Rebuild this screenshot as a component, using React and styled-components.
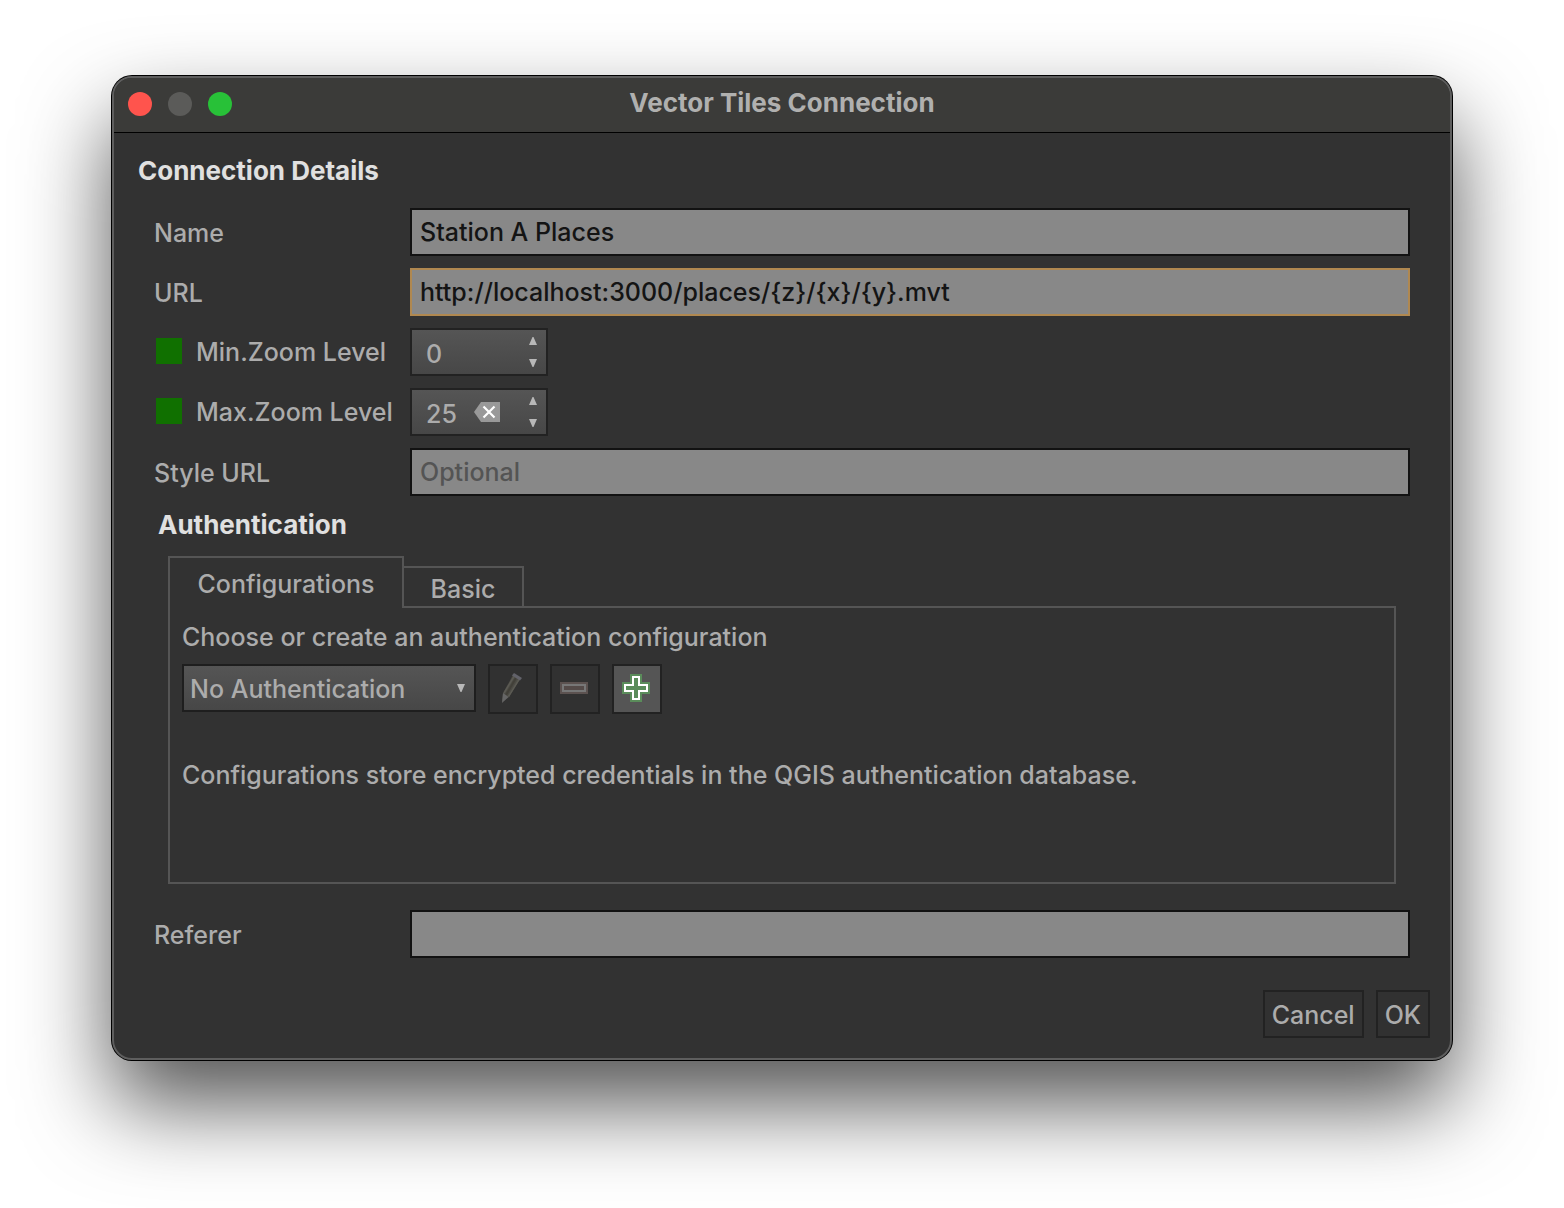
import React, { useState } from "react";
import styled, { createGlobalStyle } from "styled-components";

const Global = createGlobalStyle`
  *, *::before, *::after { box-sizing: border-box; }
  body {
    margin: 0;
    background: #fff;
    color: #acacac;
    font-family: Inter, "Liberation Sans", sans-serif;
    font-size: 25px;
    font-weight: 500;
    line-height: 32px;
  }
  button, input, select { font: inherit; color: inherit; margin: 0; outline: none; }
`;

const Desktop = styled.main`
  min-height: 100vh;
  padding: 76px 112px 148px;
`;

const Window = styled.section`
  border: 2px solid #5e5e5e;
  border-radius: 20px;
  overflow: hidden;
  background: #323232;
  box-shadow: 0 0 0 1px #000, 0 44px 88px rgba(0, 0, 0, 0.68);
`;

const TitleBar = styled.header`
  display: grid;
  grid-template-columns: 1fr auto 1fr;
  align-items: center;
  height: 55px;
  padding: 0 14px 2px;
  background: #3b3b39;
  border-bottom: 1px solid #000;
`;

const Title = styled.h1`
  margin: 0;
  padding-bottom: 2px;
  font-size: 26px;
  font-weight: 700;
  color: #b0b0af;
`;

const Lights = styled.div`
  display: flex;
  gap: 16px;
`;

const Light = styled.button`
  width: 24px;
  height: 24px;
  padding: 0;
  border: 0;
  border-radius: 50%;
  background: ${(p) => p.$color};
`;

const Body = styled.form`
  padding: 0 20px 20px 24px;
`;

const Heading = styled.h2`
  margin: 0;
  font-size: 26px;
  font-weight: 700;
  color: #e0e0e0;
`;

const SectionHeading = styled(Heading)`
  padding: 22px 0 21px;
`;

const AuthHeading = styled(Heading)`
  padding: 13px 4px 15px;
`;

const Fields = styled.div`
  display: grid;
  gap: 12px;
`;

const Indent = styled.div`
  padding: 0 20px 0 16px;
`;

const Row = styled.div`
  display: grid;
  grid-template-columns: 256px 1fr;
  align-items: center;
  height: 48px;
`;

const Label = styled.label`
  padding-top: 2px;
`;

const CheckLabel = styled.label`
  display: flex;
  align-items: flex-start;
  gap: 14px;
  padding: 0 2px;
  white-space: nowrap;
`;

const Check = styled.input`
  appearance: none;
  flex: none;
  width: 26px;
  height: 26px;
  margin-top: 2px;
  background: ${(p) => (p.checked ? "#107000" : "#555")};
`;

const TextBox = styled.input`
  width: 100%;
  height: 48px;
  padding: 0 8px;
  border: 2px solid ${(p) => (p.$active ? "#b08850" : "#121212")};
  border-radius: 0;
  background: #888;
  color: #141414;
  &::placeholder { color: #545454; opacity: 1; }
`;

const Spinner = styled.div`
  display: flex;
  align-items: center;
  width: 138px;
  height: 48px;
  padding: 0 9px 0 14px;
  border: 2px solid #222;
  background: linear-gradient(#555, #474747);
`;

const SpinValue = styled.input`
  appearance: textfield;
  flex: 1;
  min-width: 0;
  height: 44px;
  padding: 4px 0 0;
  border: 0;
  background: none;
  &::-webkit-inner-spin-button { appearance: none; }
`;

const ClearButton = styled.button`
  display: flex;
  margin-right: 29px;
  padding: 0;
  border: 0;
  background: none;
`;

const Steps = styled.div`
  display: grid;
  gap: 14px;
`;

const Step = styled.button`
  display: flex;
  padding: 0;
  border: 0;
  background: none;
`;

const AuthBox = styled.div`
  padding: 0 34px 26px 30px;
`;

const Tabs = styled.div`
  display: flex;
  align-items: flex-end;
`;

const Tab = styled.button`
  position: relative;
  height: ${(p) => (p.$active ? 52 : 42)}px;
  width: ${(p) => p.$width}px;
  margin: 0 -2px -2px 0;
  padding: ${(p) => (p.$active ? 2 : 4)}px 0 0;
  border: 2px solid #555;
  border-bottom: ${(p) => (p.$active ? "0" : "2px solid #555")};
  background: #323232;
  text-align: center;
`;

const Panel = styled.div`
  height: 278px;
  padding: 13px 12px;
  border: 2px solid #555;
`;

const Note = styled.p`
  margin: 0;
`;

const Tools = styled.div`
  display: flex;
  gap: 12px;
  margin: 11px 0 45px;
`;

const SelectWrap = styled.div`
  display: grid;
  width: 294px;
  height: 48px;
  align-items: center;
  border: 2px solid #1e1e1e;
  background: linear-gradient(#555, #474747);
  & > * { grid-area: 1 / 1; }
  & > svg { justify-self: end; margin-right: 9px; pointer-events: none; }
`;

const Select = styled.select`
  appearance: none;
  width: 100%;
  height: 44px;
  padding: 2px 6px 0;
  border: 0;
  background: none;
`;

const Tool = styled.button`
  display: flex;
  align-items: center;
  justify-content: center;
  width: 50px;
  height: 50px;
  padding: 0 2px 2px 0;
  border: 2px solid #222;
  background: ${(p) => (p.disabled ? "#313131" : "#555")};
`;

const Footer = styled.footer`
  display: flex;
  justify-content: flex-end;
  gap: 12px;
  padding-top: 32px;
`;

const Action = styled.button`
  height: 48px;
  padding: 2px 7px 0;
  border: 2px solid #222;
  background: #313131;
`;

const Arrow = ({ up }) => (
  <svg width="8" height="8" viewBox="0 0 8 8" aria-hidden="true">
    <path d={up ? "M3.5 0h1L8 8H0z" : "M0 0h8L4.5 8h-1z"} fill="#b8b8b8" />
  </svg>
);

const ClearIcon = () => (
  <svg width="26" height="20" viewBox="0 0 26 20" aria-hidden="true">
    <path d="M0 10L7 0h19v20H7z" fill="#999" />
    <path d="M9.5 4.5l11 11M20.500 4.500l-11 11" stroke="#fff" strokeWidth="2.200" />
  </svg>
);

const PencilIcon = () => (
  <svg width="26" height="32" viewBox="0 0 26 32" aria-hidden="true">
    <path d="M14 3l7 4L10 25l-7 5 1-9z" fill="#4c4b45" />
    <path d="M15 4.500L5 21M20 7.500L9.500 24.500" stroke="#5b5a53" strokeWidth="1.500" />
    <path d="M17 6L7 23" stroke="#424039" strokeWidth="2" />
    <path d="M15 1l8 5-2 2.500-8-5z" fill="#62626a" />
    <path d="M4 21l5.500 4L3 31z" fill="#666" />
  </svg>
);

const MinusIcon = () => (
  <svg width="28" height="12" viewBox="0 0 28 12" aria-hidden="true">
    <path d="M0 0h28v12H0z" fill="#5c5250" />
    <path d="M3 3h22v6H3z" fill="#554b49" stroke="#777" strokeWidth="2" />
  </svg>
);

const PlusIcon = () => (
  <svg width="28" height="28" viewBox="0 0 28 28" aria-hidden="true">
    <path d="M8 0h12v8h8v12h-8v8H8v-8H0V8h8z" fill="#5a8c5a" />
    <path d="M11 3h6v8h8v6h-8v8h-6v-8H3v-6h8z" fill="#5a8c5a" stroke="#fff" strokeWidth="2" />
  </svg>
);

function ZoomRow({ id, label, initial, clearable }) {
  const [on, setOn] = useState(true);
  const [value, setValue] = useState(initial);
  return (
    <Row>
      <CheckLabel>
        <Check type="checkbox" checked={on} onChange={(e) => setOn(e.target.checked)} />
        {label}
      </CheckLabel>
      <Spinner>
        <SpinValue id={id} type="number" aria-label={label} value={value} onChange={(e) => setValue(+e.target.value)} />
        {clearable && (
          <ClearButton type="button" aria-label="Clear" onClick={() => setValue(0)}>
            <ClearIcon />
          </ClearButton>
        )}
        <Steps>
          <Step type="button" aria-label="Increase" onClick={() => setValue(value + 1)}><Arrow up /></Step>
          <Step type="button" aria-label="Decrease" onClick={() => setValue(value - 1)}><Arrow /></Step>
        </Steps>
      </Spinner>
    </Row>
  );
}

function TextRow({ id, label, ...rest }) {
  return (
    <Row>
      <Label htmlFor={id}>{label}</Label>
      <TextBox id={id} type="text" {...rest} />
    </Row>
  );
}

export default function App() {
  return (
    <>
      <Global />
      <Desktop>
        <Window>
          <TitleBar>
            <Lights>
              <Light type="button" aria-label="Close" $color="#ff544d" />
              <Light type="button" aria-label="Minimize" $color="#5b5b59" />
              <Light type="button" aria-label="Zoom" $color="#28c138" />
            </Lights>
            <Title>Vector Tiles Connection</Title>
          </TitleBar>
          <Body onSubmit={(e) => e.preventDefault()}>
            <SectionHeading>Connection Details</SectionHeading>
            <Indent>
              <Fields>
                <TextRow id="name" label="Name" defaultValue="Station A Places" />
                <TextRow id="url" label="URL" defaultValue="http://localhost:3000/places/{z}/{x}/{y}.mvt" $active />
                <ZoomRow id="min" label="Min.Zoom Level" initial={0} />
                <ZoomRow id="max" label="Max.Zoom Level" initial={25} clearable />
                <TextRow id="style" label="Style URL" placeholder="Optional" />
              </Fields>
              <AuthHeading>Authentication</AuthHeading>
            </Indent>
            <AuthBox>
              <Tabs role="tablist">
                <Tab type="button" role="tab" aria-selected="true" $active $width={236}>Configurations</Tab>
                <Tab type="button" role="tab" aria-selected="false" $width={122}>Basic</Tab>
              </Tabs>
              <Panel role="tabpanel">
                <Note as="label" htmlFor="auth">Choose or create an authentication configuration</Note>
                <Tools>
                  <SelectWrap>
                    <Select id="auth"><option>No Authentication</option></Select>
                    <Arrow />
                  </SelectWrap>
                  <Tool type="button" aria-label="Edit" disabled><PencilIcon /></Tool>
                  <Tool type="button" aria-label="Remove" disabled><MinusIcon /></Tool>
                  <Tool type="button" aria-label="Add"><PlusIcon /></Tool>
                </Tools>
                <Note>Configurations store encrypted credentials in the QGIS authentication database.</Note>
              </Panel>
            </AuthBox>
            <Indent>
              <TextRow id="referer" label="Referer" />
            </Indent>
            <Footer>
              <Action type="button">Cancel</Action>
              <Action type="submit">OK</Action>
            </Footer>
          </Body>
        </Window>
      </Desktop>
    </>
  );
}
